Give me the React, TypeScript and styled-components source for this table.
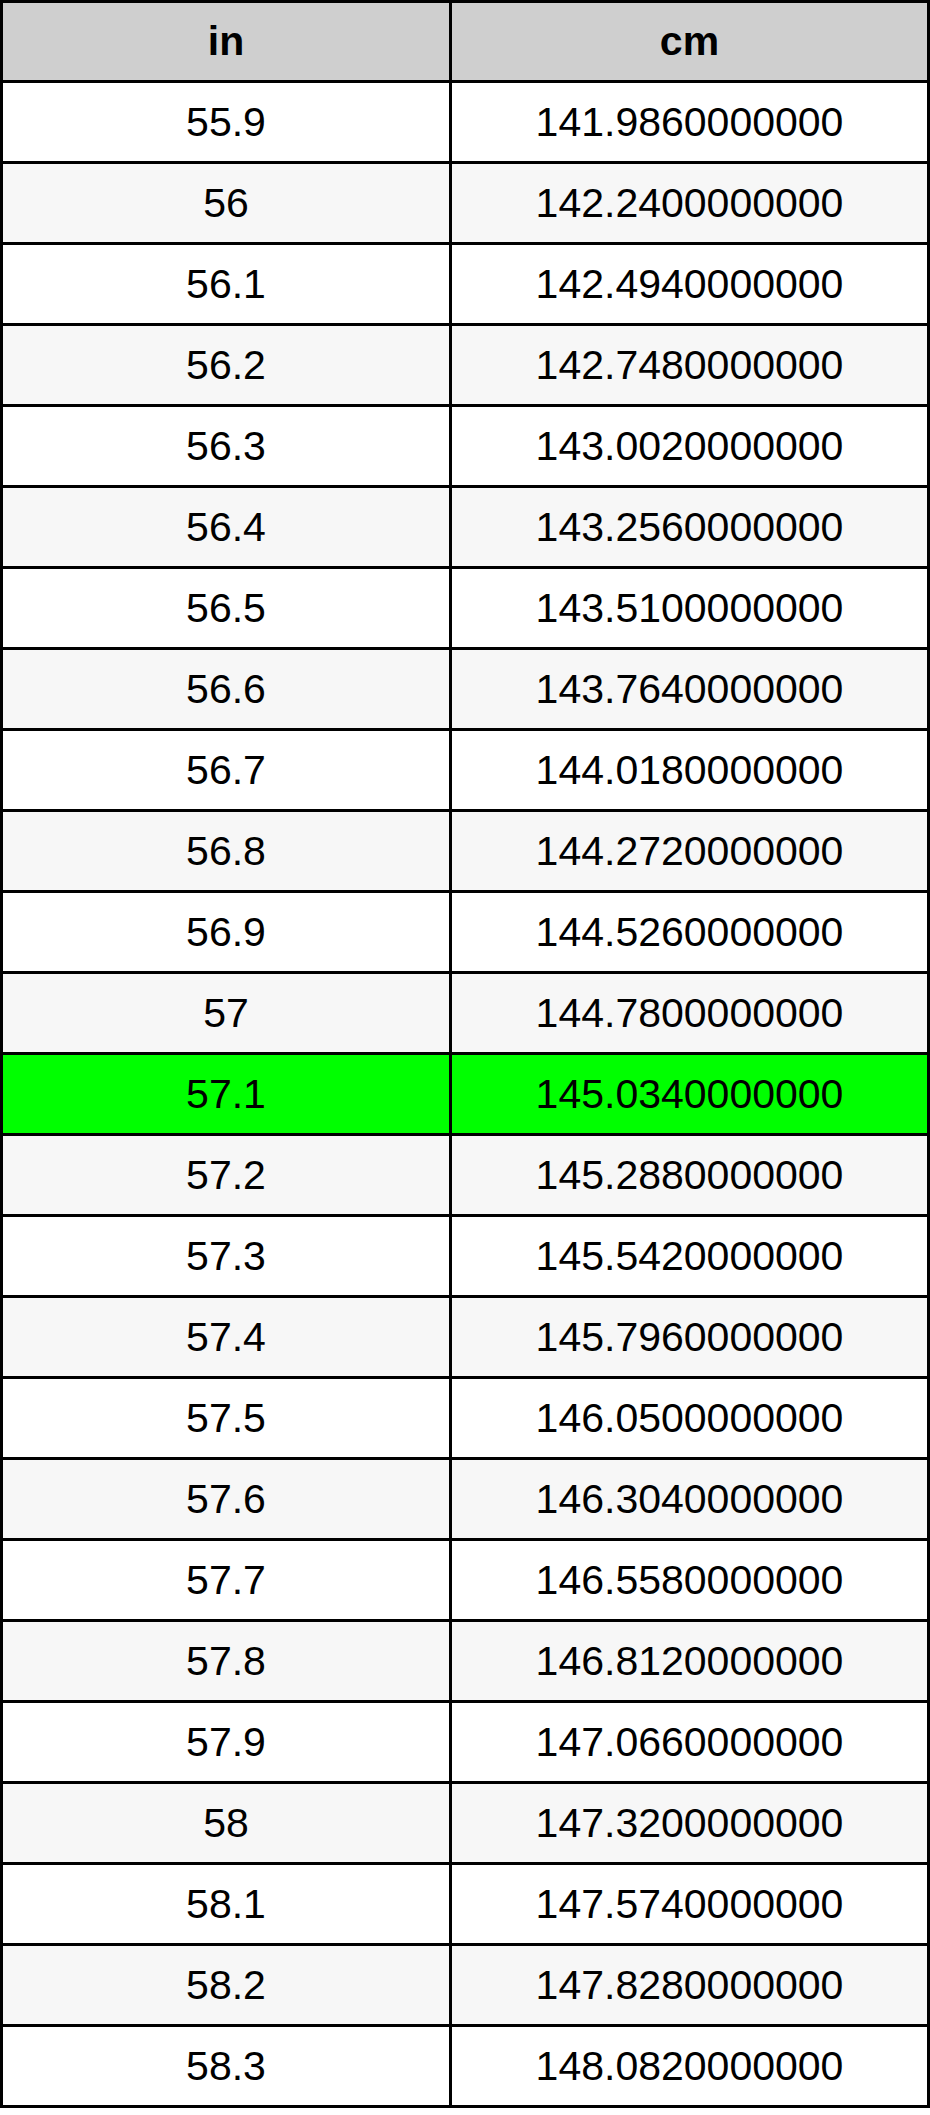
import React from "react";
import styled, { createGlobalStyle } from "styled-components";

const GlobalStyle = createGlobalStyle`
  html, body {
    margin: 0;
    padding: 0;
    background: #ffffff;
  }
  body {
    font-family: "Liberation Sans", Arial, sans-serif;
  }
`;

const START = 55.9;
const FACTOR = 2.54;
const HIGHLIGHT = "57.1";

const rows = Array.from({ length: 25 }, (_, i) => {
  const inches = Math.round((START + i * 0.1) * 10) / 10;
  return {
    inches: String(inches),
    cm: (inches * FACTOR).toFixed(10),
  };
});

const App = () => {
  return (
    <>
      <GlobalStyle />
      <Table>
        <HeaderCell>in</HeaderCell>
        <HeaderCell>cm</HeaderCell>
        {rows.map((row, i) => {
          const bg =
            row.inches === HIGHLIGHT
              ? "#00ff00"
              : i % 2 === 0
              ? "#ffffff"
              : "#f7f7f7";
          return (
            <React.Fragment key={row.inches}>
              <Cell bgColor={bg}>{row.inches}</Cell>
              <Cell bgColor={bg}>{row.cm}</Cell>
            </React.Fragment>
          );
        })}
      </Table>
    </>
  );
};

export default App;

const Table = styled.div`
  width: 930px;
  box-sizing: border-box;
  display: grid;
  grid-template-columns: 446px 475px;
  grid-template-rows: 77px;
  grid-auto-rows: 78px;
  gap: 3px;
  padding: 3px;
  background-color: #000000;
`;

const HeaderCell = styled.div`
  background-color: #cfcfcf;
  color: #000000;
  font-size: 41px;
  font-weight: bold;
  display: flex;
  justify-content: center;
  align-items: center;
`;

const Cell = styled.div<{ bgColor: string }>`
  background-color: ${(props) => props.bgColor};
  color: #000000;
  font-size: 41px;
  display: flex;
  justify-content: center;
  align-items: center;
`;
